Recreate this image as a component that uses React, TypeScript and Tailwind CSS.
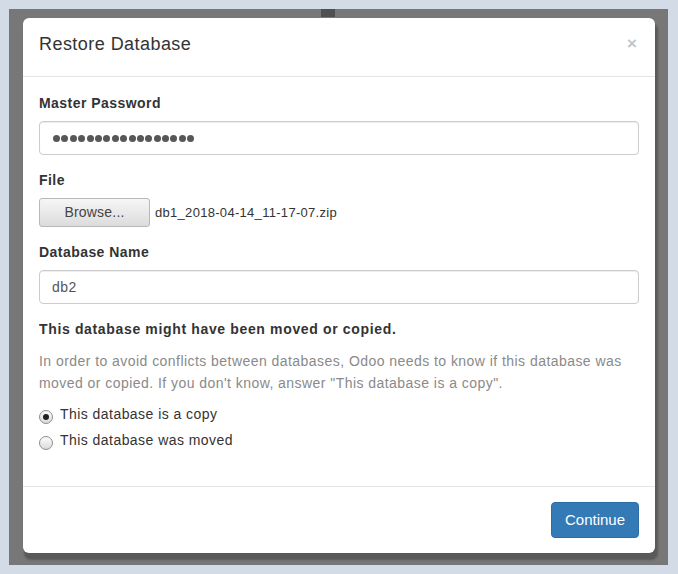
import React from "react";

const font = { fontFamily: '"Liberation Sans", Arial, Helvetica, sans-serif' };

function Radio({ checked }: { checked?: boolean }) {
  return (
    <span className="relative mt-[6px] flex h-[14px] w-[14px] shrink-0 items-center justify-center rounded-full border border-[#8e8e8e] bg-gradient-to-b from-[#fdfdfd] to-[#dadada]">
      {checked && <span className="h-[6px] w-[6px] rounded-full bg-[#222]" />}
    </span>
  );
}

export default function App() {
  const dots = Array.from({ length: 17 });
  return (
    <div style={font} className="relative h-[574px] w-[678px] bg-[#d3dce6] pl-[9px] pt-[9px]">
      <div className="relative h-[556px] w-[659px] bg-[#777777] pl-[14px] pt-[9px]">
        <div className="absolute left-[312px] top-0 h-[8px] w-[14px] bg-[#4f4f4f]" />
        <div className="flex h-[535px] w-[632px] flex-col rounded-[6px] bg-white shadow-[2px_6px_2px_1px_rgba(0,0,0,0.25)]">
          {/* header */}
          <div className="flex h-[59px] shrink-0 items-start justify-between border-b border-[#e5e5e5] pl-[16px] pr-[18px] pt-[13px]">
            <div className="text-[18px] leading-[26px] tracking-[0.45px] text-[#333]">Restore Database</div>
            <div className="pt-[2px] text-[17px] font-bold leading-[22px] text-[#c4c4c4]">×</div>
          </div>
          {/* body */}
          <div className="flex flex-1 flex-col px-[16px] pt-[16px] text-[14px] tracking-[0.45px] text-[#333]">
            <div className="mb-[8px] font-bold leading-[20px]">Master Password</div>
            <div className="flex h-[34px] items-center rounded-[4px] border border-[#ccc] px-[13px] shadow-[inset_0_1px_1px_rgba(0,0,0,0.075)]">
              <div className="flex gap-[1.4px] pt-[1px]">
                {dots.map((_, i) => (
                  <span key={i} className="h-[7px] w-[7px] rounded-full bg-[#575757]" />
                ))}
              </div>
            </div>
            <div className="mb-[8px] mt-[15px] font-bold leading-[20px]">File</div>
            <div className="flex items-center">
              <div className="flex h-[29px] w-[111px] items-center justify-center rounded-[3px] border border-[#b8b8b8] bg-gradient-to-b from-[#f6f6f6] to-[#dcdcdc] text-[14px] tracking-[0.2px] text-[#444]">
                Browse...
              </div>
              <span className="ml-[5px] text-[13px] tracking-[0.3px] text-[#333]">db1_2018-04-14_11-17-07.zip</span>
            </div>
            <div className="mb-[8px] mt-[15px] font-bold leading-[20px]">Database Name</div>
            <div className="flex h-[34px] items-center rounded-[4px] border border-[#ccc] px-[12px] text-[14px] text-[#555] shadow-[inset_0_1px_1px_rgba(0,0,0,0.075)]">
              db2
            </div>
            <div className="mt-[15px] text-[14px] font-bold leading-[20px] tracking-[0.65px] text-[#333]">
              This database might have been moved or copied.
            </div>
            <p className="mt-[11px] text-[14px] leading-[22px] tracking-[0.45px] text-[#8a8a8a]">
              In order to avoid conflicts between databases, Odoo needs to know if this database was
              moved or copied. If you don't know, answer "This database is a copy".
            </p>
            <div className="mt-[10px] flex items-start gap-[7px] leading-[20px]">
              <Radio checked />
              <span>This database is a copy</span>
            </div>
            <div className="mt-[6px] flex items-start gap-[7px] leading-[20px]">
              <Radio />
              <span>This database was moved</span>
            </div>
          </div>
          {/* footer */}
          <div className="flex h-[67px] shrink-0 items-start justify-end border-t border-[#e5e5e5] px-[16px] pt-[15px]">
            <div className="flex h-[36px] w-[88px] items-center justify-center rounded-[4px] border border-[#2e6da4] bg-[#337ab7] text-[15px] text-white">
              Continue
            </div>
          </div>
        </div>
      </div>
    </div>
  );
}
